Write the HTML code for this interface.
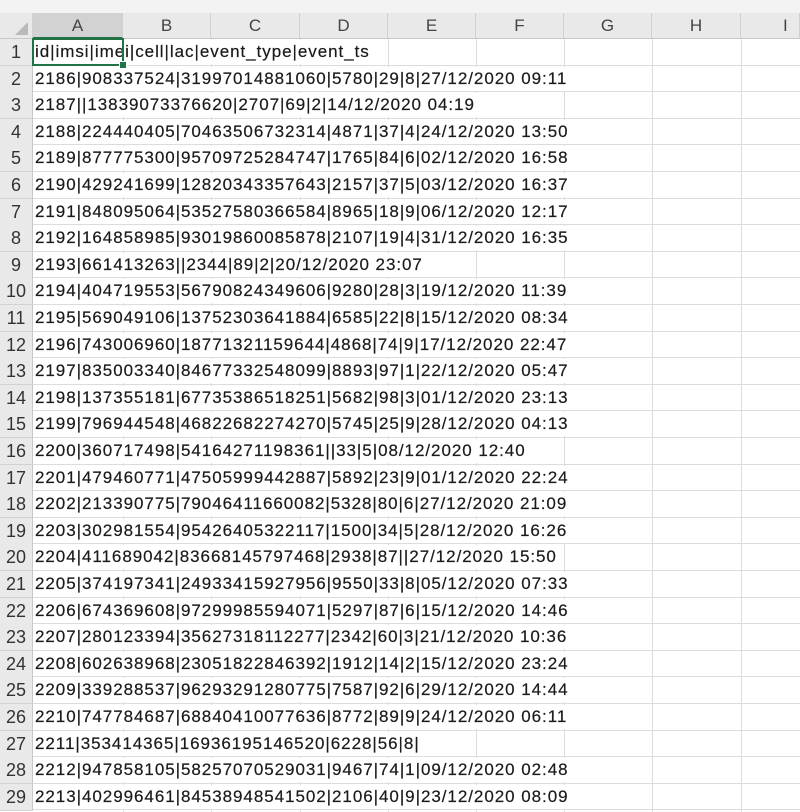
<!DOCTYPE html>
<html><head><style>
*{margin:0;padding:0;box-sizing:border-box}
body{width:800px;height:812px;overflow:hidden;background:#fff;font-family:"Liberation Sans",sans-serif;position:relative}
.top{position:absolute;left:0;top:0;width:800px;height:13px;background:#f3f3f3}
.hdr{position:absolute;top:13px;height:26px;background:#e9e9e9;border-right:1px solid #d0d0d0;border-bottom:1px solid #c8c8c8;color:#444;font-size:17px;text-align:center;line-height:26px}
.rh{position:absolute;left:0;width:33px;background:#e9e9e9;border-bottom:1px solid #d2d2d2;border-right:1px solid #c8c8c8;color:#333;font-size:18px;text-align:center}
.hl{position:absolute;left:0;width:800px;height:1px;background:#dcdcdc}
.vl{position:absolute;top:39px;width:1px;height:773px;background:#dcdcdc}
.t{position:absolute;left:34px;padding-left:1px;padding-right:2px;height:24px;line-height:24px;background:#fff;font-size:17px;letter-spacing:0.95px;color:#1a1a1a;white-space:nowrap;-webkit-text-stroke:0.2px #1a1a1a}
.sel{position:absolute;left:32px;top:38px;width:92px;height:28px;border:2px solid #217346}
.sel:after{content:"";position:absolute;right:-5px;bottom:-5px;width:6px;height:6px;background:#217346;border:1px solid #fff}
</style></head><body>
<div class="top"></div>
<div class="hdr" style="left:0;width:33px"><svg width="33" height="26"><polygon points="28,9 28,22 15,22" fill="#b9b9b9"/></svg></div>
<div class="hdr" style="left:33px;width:90px;background:#d2d2d2;border-bottom:2px solid #217346">A</div>
<div class="hdr" style="left:123px;width:88px">B</div>
<div class="hdr" style="left:211px;width:89px">C</div>
<div class="hdr" style="left:300px;width:88px">D</div>
<div class="hdr" style="left:388px;width:88px">E</div>
<div class="hdr" style="left:476px;width:88px">F</div>
<div class="hdr" style="left:564px;width:88px">G</div>
<div class="hdr" style="left:652px;width:89px">H</div>
<div class="hdr" style="left:741px;width:59px;text-align:left;padding-left:42px">I</div>
<div id="g"></div>
<script>
var d=["id|imsi|imei|cell|lac|event_type|event_ts",
"2186|908337524|31997014881060|5780|29|8|27/12/2020 09:11",
"2187||13839073376620|2707|69|2|14/12/2020 04:19",
"2188|224440405|70463506732314|4871|37|4|24/12/2020 13:50",
"2189|877775300|95709725284747|1765|84|6|02/12/2020 16:58",
"2190|429241699|12820343357643|2157|37|5|03/12/2020 16:37",
"2191|848095064|53527580366584|8965|18|9|06/12/2020 12:17",
"2192|164858985|93019860085878|2107|19|4|31/12/2020 16:35",
"2193|661413263||2344|89|2|20/12/2020 23:07",
"2194|404719553|56790824349606|9280|28|3|19/12/2020 11:39",
"2195|569049106|13752303641884|6585|22|8|15/12/2020 08:34",
"2196|743006960|18771321159644|4868|74|9|17/12/2020 22:47",
"2197|835003340|84677332548099|8893|97|1|22/12/2020 05:47",
"2198|137355181|67735386518251|5682|98|3|01/12/2020 23:13",
"2199|796944548|46822682274270|5745|25|9|28/12/2020 04:13",
"2200|360717498|54164271198361||33|5|08/12/2020 12:40",
"2201|479460771|47505999442887|5892|23|9|01/12/2020 22:24",
"2202|213390775|79046411660082|5328|80|6|27/12/2020 21:09",
"2203|302981554|95426405322117|1500|34|5|28/12/2020 16:26",
"2204|411689042|83668145797468|2938|87||27/12/2020 15:50",
"2205|374197341|24933415927956|9550|33|8|05/12/2020 07:33",
"2206|674369608|97299985594071|5297|87|6|15/12/2020 14:46",
"2207|280123394|35627318112277|2342|60|3|21/12/2020 10:36",
"2208|602638968|23051822846392|1912|14|2|15/12/2020 23:24",
"2209|339288537|96293291280775|7587|92|6|29/12/2020 14:44",
"2210|747784687|68840410077636|8772|89|9|24/12/2020 06:11",
"2211|353414365|16936195146520|6228|56|8|",
"2212|947858105|58257070529031|9467|74|1|09/12/2020 02:48",
"2213|402996461|84538948541502|2106|40|9|23/12/2020 08:09"];
var h="",rh=26.6;
[123,211,300,388,476,564,652,741].forEach(function(x){h+='<div class="vl" style="left:'+x+'px"></div>';});
for(var i=0;i<d.length;i++){var y=39+i*rh;
h+='<div class="hl" style="top:'+Math.round(y+rh-1)+'px"></div>';
h+='<div class="rh" style="top:'+Math.round(y)+'px;height:'+Math.round(rh)+'px;line-height:'+Math.round(rh)+'px">'+(i+1)+'</div>';
h+='<div class="t" style="top:'+Math.round(y+1)+'px">'+d[i]+'</div>';}
h+='<div class="sel"></div>';
document.getElementById("g").innerHTML=h;
</script>
</body></html>
